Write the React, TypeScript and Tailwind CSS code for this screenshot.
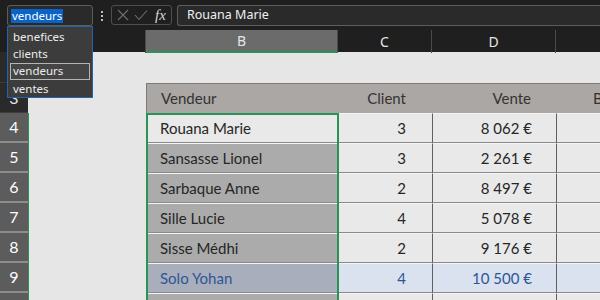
import React from 'react';

const cols = 'grid grid-cols-[28px_1px_117px_192px_94px_124px_1fr]';

type Row = { n: number; name: string; client: string; vente: string; blue?: boolean };

const rows: Row[] = [
  { n: 4, name: 'Rouana Marie', client: '3', vente: '8 062 €' },
  { n: 5, name: 'Sansasse Lionel', client: '3', vente: '2 261 €' },
  { n: 6, name: 'Sarbaque Anne', client: '2', vente: '8 497 €' },
  { n: 7, name: 'Sille Lucie', client: '4', vente: '5 078 €' },
  { n: 8, name: 'Sisse Médhi', client: '2', vente: '9 176 €' },
  { n: 9, name: 'Solo Yohan', client: '4', vente: '10 500 €', blue: true },
];

function TopBar() {
  return (
    <div className="h-[30px] bg-[#1f1f1f] flex items-start pt-[5px] pl-[7px]">
      <div className="w-[86px] h-[21px] border border-[#5c5c5c] rounded-[3px] bg-[#2a2a2a] flex items-center pl-[3px]">
        <span className="bg-[#0a64c8] text-white text-[11.5px] leading-[14px] px-[1px]">vendeurs</span>
      </div>
      <div className="w-[18px] h-[21px] flex flex-col items-center justify-center gap-[2px]">
        <span className="w-[2px] h-[2px] bg-[#bdbdbd]" />
        <span className="w-[2px] h-[2px] bg-[#bdbdbd]" />
        <span className="w-[2px] h-[2px] bg-[#bdbdbd]" />
      </div>
      <div className="w-[61px] h-[20px] border border-[#4e4e4e] rounded-[3px] flex items-center pl-[5px] gap-[5px]">
        <svg width="12" height="12" viewBox="0 0 12 12" stroke="#6e6e6e" strokeWidth="1.1" fill="none">
          <path d="M1 1 L11 11 M11 1 L1 11" />
        </svg>
        <svg width="14" height="12" viewBox="0 0 14 12" stroke="#6e6e6e" strokeWidth="1.1" fill="none">
          <path d="M1 6 L5 10.5 L13 1.5" />
        </svg>
        <span className="ml-[2px] text-[#d6d6d6] text-[15px] italic leading-none font-['Liberation_Serif',serif]">fx</span>
      </div>
      <div className="ml-[5px] flex-1 h-[21px] border border-[#5c5c5c] border-r-0 rounded-l-[3px] bg-[#2a2a2a] flex items-center pl-[9px]">
        <span className="text-[#f0f0f0] text-[12.5px]">Rouana Marie</span>
      </div>
    </div>
  );
}

function ColHeaders() {
  const sep = 'border-r border-[#4a4a4a]';
  return (
    <div className={`${cols} h-[22px] bg-[#1f1f1f] text-[#e6e6e6] text-[14px]`}>
      <div />
      <div />
      <div className={sep} />
      <div className={`${sep} bg-[#6b6b6b] border-b-2 border-b-[#2f9157] flex items-center justify-center`}>B</div>
      <div className={`${sep} flex items-center justify-center`}>C</div>
      <div className={`${sep} flex items-center justify-center`}>D</div>
      <div />
    </div>
  );
}

function RowHeader({ n, sel }: { n: number; sel?: boolean }) {
  return (
    <>
      <div
        className={`flex items-center justify-center text-[16px] ${
          sel ? 'bg-[#5c5c5c] text-white border-b-2 border-[#8d8d8d]' : 'bg-[#2a2a2a] text-[#e6e6e6] border-b border-[#3d3d3d]'
        }`}
      >
        {n}
      </div>
      <div className={sel ? 'bg-[#2a9356]' : 'bg-[#e6e6e6]'} />
    </>
  );
}

export default function App() {
  const cell = 'border-t border-t-[#f4f4f4] border-b border-b-[#8a8a8a]';
  return (
    <div className="w-[600px] h-[300px] overflow-hidden relative bg-[#e6e6e6] font-['Noto_Sans',sans-serif]">
      <TopBar />
      <ColHeaders />

      <div className="font-['Lato',sans-serif] text-[15px]">
        {/* row 2 */}
        <div className={`${cols} h-[31px]`}>
          <RowHeader n={2} />
          <div /><div /><div /><div /><div />
        </div>
        {/* row 3 : table header */}
        <div className={`${cols} h-[30px] text-[#333333]`}>
          <RowHeader n={3} />
          <div />
          <div className="bg-[#aba7a4] border-t border-l border-[#7d7a78] flex items-center pl-[14px]">Vendeur</div>
          <div className="bg-[#aba7a4] border-t border-[#7d7a78] flex items-center justify-end pr-[26px]">Client</div>
          <div className="bg-[#aba7a4] border-t border-[#7d7a78] flex items-center justify-end pr-[25px]">Vente</div>
          <div className="bg-[#aba7a4] border-t border-[#7d7a78] flex items-center pl-[37px] whitespace-nowrap overflow-hidden">Bénéfice</div>
        </div>
        {rows.map((r, i) => (
          <div key={r.n} className={`${cols} h-[30px] ${r.blue ? 'text-[#2f5597]' : 'text-[#262626]'}`}>
            <RowHeader n={r.n} sel />
            <div />
            <div
              className={`${cell} flex items-center pl-[14px] ${
                i === 0 ? 'bg-[#e9e9e9]' : r.blue ? 'bg-[#a8aebb]' : 'bg-[#ababab]'
              }`}
            >
              {r.name}
            </div>
            <div className={`${cell} flex items-center justify-end pr-[26px] ${r.blue ? 'bg-[#dae2f0]' : 'bg-[#e9e9e9]'}`}>
              {r.client}
            </div>
            <div
              className={`${cell} border-l border-l-[#5f5f5f] flex items-center justify-end pr-[24px] ${
                r.blue ? 'bg-[#dae2f0]' : 'bg-[#e9e9e9]'
              }`}
            >
              {r.vente}
            </div>
            <div className={`${cell} border-l border-l-[#5f5f5f] ${r.blue ? 'bg-[#dae2f0]' : 'bg-[#e9e9e9]'}`} />
          </div>
        ))}
        {/* row 10 */}
        <div className={`${cols} h-[30px]`}>
          <RowHeader n={10} sel />
          <div />
          <div className="bg-[#ababab] border-t border-t-[#f4f4f4]" />
          <div className="bg-[#e9e9e9] border-t border-t-[#f4f4f4]" />
          <div className="bg-[#e9e9e9] border-t border-t-[#f4f4f4] border-l border-l-[#5f5f5f]" />
          <div className="bg-[#e9e9e9] border-t border-t-[#f4f4f4] border-l border-l-[#5f5f5f]" />
        </div>
      </div>

      {/* selection outline B4:B10 */}
      <div className="absolute left-[146px] top-[113px] w-[193px] h-[200px] border-2 border-[#2a9356] pointer-events-none" />

      {/* name box dropdown */}
      <div className="absolute left-[7px] top-[26px] w-[86px] h-[72px] bg-[#3c3c3c] border border-[#2463ad] text-[#ececec] text-[11.5px] flex flex-col px-[2px] py-[1px]">
        <div className="h-[18px] flex items-center pl-[3px]">benefices</div>
        <div className="h-[18px] flex items-center pl-[3px]">clients</div>
        <div className="h-[17px] flex items-center pl-[2px] border border-[#b5b5b5] bg-[#454545]">vendeurs</div>
        <div className="h-[18px] flex items-center pl-[3px]">ventes</div>
      </div>
    </div>
  );
}
